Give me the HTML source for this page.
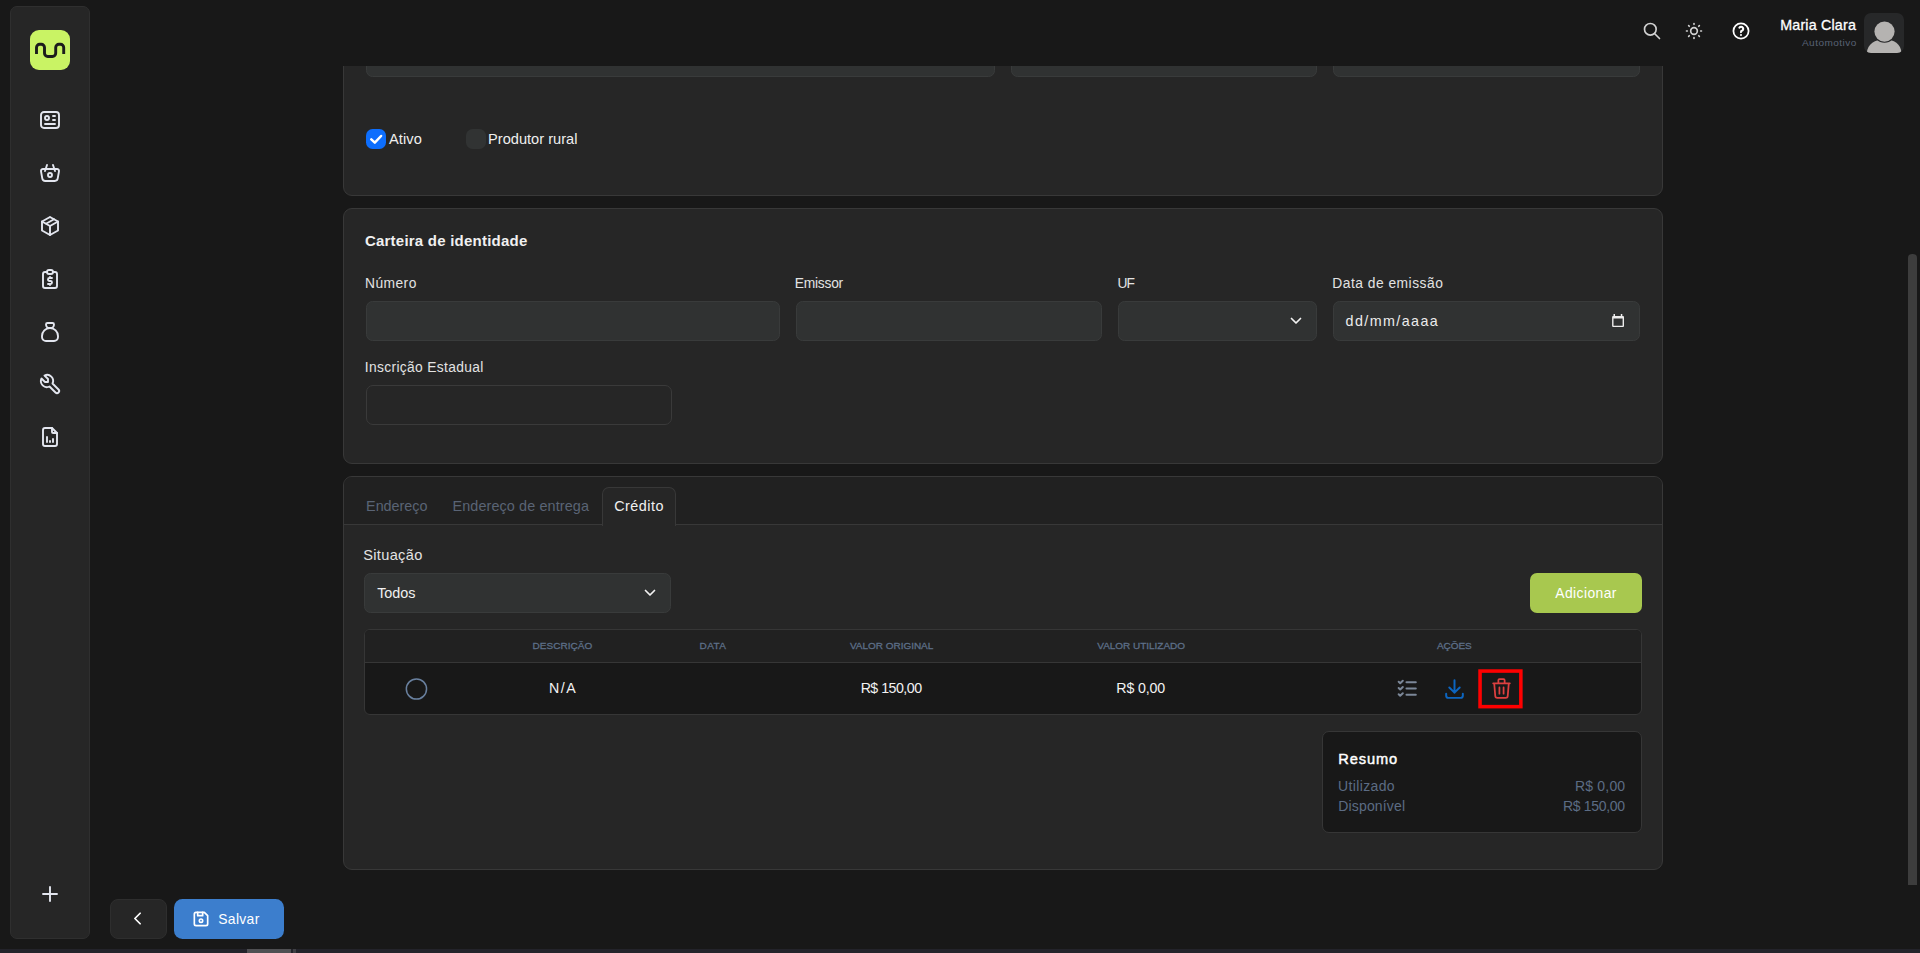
<!DOCTYPE html>
<html lang="pt-BR">
<head>
<meta charset="utf-8">
<title>Cliente</title>
<style>
*{box-sizing:border-box;margin:0;padding:0}
html,body{width:1920px;height:953px;overflow:hidden;background:#181818;font-family:"Liberation Sans",sans-serif;color:#e6e6e6}
body{position:relative}
.abs{position:absolute}
.sidebar{left:10px;top:6px;width:80px;height:933px;background:#262626;border:1px solid #2f2f2f;border-radius:7px}
.logo{left:30px;top:30px;width:40px;height:40px;background:#c9f364;border-radius:9px}
.sico{width:24px;height:24px;left:38px}
.sico svg{display:block;width:24px;height:24px;fill:none;stroke:#e3e6ef;stroke-width:1.9;stroke-linecap:round;stroke-linejoin:round}
.card{background:#262626;border:1px solid #383838;border-radius:9px}
.inp{background:#303232;border:1px solid #393b3b;border-radius:6.500px;height:40px}
.lbl{font-size:14px;color:#e3e3e3;white-space:nowrap;line-height:16px;letter-spacing:-.1px}
.t{white-space:nowrap}
.th{font-weight:400;color:#5d6f88;-webkit-text-stroke:0.300px #5d6f88;transform:scaleY(0.900);transform-origin:0 100%}
.td{font-size:14px;line-height:18px;color:#f2f2f2}
.rs{font-size:14.500px;line-height:18px;color:#5c6c84}
</style>
</head>
<body>

<!-- SIDEBAR -->
<div class="abs sidebar"></div>
<div class="abs logo">
  <svg width="40" height="40" viewBox="0 0 40 40" style="display:block"><path d="M6.500 23.900V17.500a3.200 3.200 0 0 1 3.200-3.200h1.600a3.200 3.200 0 0 1 3.200 3.200V23.300a3.200 3.200 0 0 0 3.200 3.200h4.800a3.200 3.200 0 0 0 3.200-3.200V17.500a3.200 3.200 0 0 1 3.200-3.200h1.600a3.200 3.200 0 0 1 3.200 3.200V23.900" fill="none" stroke="#1c1c1c" stroke-width="2.900" stroke-linecap="butt" stroke-linejoin="round"/></svg>
</div>
<div class="abs sico" style="top:108px"><svg viewBox="0 0 24 24"><path d="M3 7a3 3 0 0 1 3-3h12a3 3 0 0 1 3 3v10a3 3 0 0 1-3 3H6a3 3 0 0 1-3-3z"/><circle cx="9" cy="10" r="2"/><path d="M15 8h2M15 12h2M7 16h10"/></svg></div>
<div class="abs sico" style="top:161px"><svg viewBox="0 0 24 24"><path d="M10 14a2 2 0 1 0 4 0a2 2 0 0 0-4 0"/><path d="M5.001 8H19a2 2 0 0 1 1.977 2.304l-1.255 7.152A3 3 0 0 1 16.756 20H7.244a3 3 0 0 1-2.965-2.544L3.024 10.304A2 2 0 0 1 5.001 8z"/><path d="M17 10l-2-6M7 10l2-6"/></svg></div>
<div class="abs sico" style="top:214px"><svg viewBox="0 0 24 24"><path d="M12 3l8 4.5v9L12 21l-8-4.5v-9L12 3"/><path d="M12 12l8-4.5M12 12v9M12 12L4 7.5M16 5.25l-8 4.5"/></svg></div>
<div class="abs sico" style="top:267px"><svg viewBox="0 0 24 24"><path d="M9 5H7a2 2 0 0 0-2 2v12a2 2 0 0 0 2 2h10a2 2 0 0 0 2-2V7a2 2 0 0 0-2-2h-2"/><path d="M9 5a2 2 0 0 1 2-2h2a2 2 0 0 1 2 2a2 2 0 0 1-2 2h-2a2 2 0 0 1-2-2z"/><path d="M14 11h-2.5a1.5 1.5 0 0 0 0 3h1a1.5 1.5 0 0 1 0 3H10M12 17v1m0-8v1"/></svg></div>
<div class="abs sico" style="top:320px"><svg viewBox="0 0 24 24"><path d="M9.5 3h5A1.5 1.5 0 0 1 16 4.500A3.5 3.500 0 0 1 12.5 8h-1A3.5 3.500 0 0 1 8 4.500A1.5 1.500 0 0 1 9.500 3z"/><path d="M4 17v-1a8 8 0 1 1 16 0v1a4 4 0 0 1-4 4H8a4 4 0 0 1-4-4z"/></svg></div>
<div class="abs sico" style="top:372px"><svg viewBox="0 0 24 24"><path d="M7 10h3V7L6.500 3.500a6 6 0 0 1 8 8l6 6a2 2 0 0 1-3 3l-6-6a6 6 0 0 1-8-8L7 10"/></svg></div>
<div class="abs sico" style="top:425px"><svg viewBox="0 0 24 24"><path d="M14 3v4a1 1 0 0 0 1 1h4"/><path d="M17 21H7a2 2 0 0 1-2-2V5a2 2 0 0 1 2-2h7l5 5v11a2 2 0 0 1-2 2z"/><path d="M9 17v-5M12 17v-1M15 17v-3"/></svg></div>
<div class="abs sico" style="top:882px"><svg viewBox="0 0 24 24"><path d="M12 5v14M5 12h14"/></svg></div>


<!-- TOPBAR -->
<div class="abs" style="left:1642px;top:21px;width:20px;height:20px"><svg viewBox="0 0 24 24" width="20" height="20" style="display:block" fill="none" stroke="#d2d2d2" stroke-width="2" stroke-linecap="round" stroke-linejoin="round"><circle cx="10" cy="10" r="7"/><path d="M21 21l-6-6"/></svg></div>
<div class="abs" style="left:1684px;top:21px;width:20px;height:20px"><svg viewBox="0 0 24 24" width="20" height="20" style="display:block" fill="none" stroke="#d2d2d2" stroke-width="2" stroke-linecap="round" stroke-linejoin="round"><circle cx="12" cy="12" r="4"/><path d="M3 12h1m8-9v1m8 8h1m-9 8v1M5.600 5.600l.7.7m12.100-.7l-.7.7m0 11.400l.7.7m-12.100-.7l-.7.7"/></svg></div>
<div class="abs" style="left:1731px;top:21px;width:20px;height:20px"><svg viewBox="0 0 24 24" width="20" height="20" style="display:block" fill="none" stroke="#ffffff" stroke-width="2.1" stroke-linecap="round" stroke-linejoin="round"><circle cx="12" cy="12" r="9.100"/><path stroke-width="2.500" d="M12 16.800v.01M12 13.300a1.500 1.500 0 0 1 1-1.500a2.500 2.500 0 1 0-2.900-3.800"/></svg></div>
<div class="abs t" id="uname" style="left:1780.18px;top:15.00px;font-size:14.30px;line-height:20px;letter-spacing:0.177px;font-weight:400;-webkit-text-stroke:0.300px #fff;color:#fff">Maria Clara</div>
<div class="abs t" id="urole" style="left:1801.97px;top:32.00px;font-size:10.05px;line-height:20px;letter-spacing:0.445px;color:#596275;transform:scaleY(0.880);transform-origin:0 100%">Automotivo</div>
<div class="abs" style="left:1864px;top:13px;width:40px;height:40px;border-radius:7px;background:#272829;overflow:hidden"><svg width="40" height="40" viewBox="0 0 40 40" style="display:block"><path d="M2.800 40C3.500 31 11 26.300 20.500 26.300S37 31 37.400 40z" fill="#b5b3b1"/><circle cx="20.500" cy="18.600" r="11.200" fill="#272829"/><circle cx="20.500" cy="18.600" r="10.100" fill="#b5b3b1"/></svg></div>


<!-- CONTENT -->
<div class="abs" style="left:0;top:66px;width:1920px;height:887px;overflow:hidden" id="clip">
<div class="abs card" style="left:343px;top:-40px;width:1320px;height:170px"></div>
<div class="abs inp" style="left:366px;top:-29px;width:629px"></div>
<div class="abs inp" style="left:1011px;top:-29px;width:306px"></div>
<div class="abs inp" style="left:1333px;top:-29px;width:307px"></div>
</div>
<div class="abs" style="left:366px;top:129px;width:20px;height:20px;border-radius:6.500px;background:#0d6efd"><svg width="20" height="20" viewBox="0 0 20 20" style="display:block"><path d="M5.300 10.400l3.500 3.300l6.300-6.700" fill="none" stroke="#fff" stroke-width="2.500" stroke-linecap="round" stroke-linejoin="round"/></svg></div>
<div class="abs t" id="t_ativo" style="left:388.99px;top:129.00px;font-size:14.60px;line-height:20px;letter-spacing:0.092px;color:#efefef">Ativo</div>
<div class="abs" style="left:466px;top:129px;width:20px;height:20px;border-radius:6.500px;background:#313333"></div>
<div class="abs t" id="t_prod" style="left:488.04px;top:129.00px;font-size:14.60px;line-height:20px;letter-spacing:0.016px;color:#efefef">Produtor rural</div>

<div class="abs card" style="left:343px;top:208px;width:1320px;height:256px"></div>
<div class="abs t" id="t_cart" style="left:364.91px;top:231.00px;font-size:15.00px;line-height:20px;letter-spacing:0.229px;font-weight:700;color:#f0f0f0">Carteira de identidade</div>
<div class="abs lbl" id="l_num" style="left:365.04px;top:274.00px;font-size:13.80px;line-height:20px;letter-spacing:0.443px">Número</div>
<div class="abs lbl" id="l_emi" style="left:794.85px;top:274.00px;font-size:13.80px;line-height:20px;letter-spacing:-0.255px">Emissor</div>
<div class="abs lbl" id="l_uf" style="left:1117.44px;top:274.00px;font-size:13.80px;line-height:20px;letter-spacing:-0.970px">UF</div>
<div class="abs lbl" id="l_data" style="left:1332.29px;top:274.00px;font-size:13.80px;line-height:20px;letter-spacing:0.501px">Data de emissão</div>
<div class="abs inp" style="left:366px;top:301px;width:414px"></div>
<div class="abs inp" style="left:796px;top:301px;width:306px"></div>
<div class="abs inp" style="left:1118px;top:301px;width:199px"></div>
<div class="abs inp" style="left:1333px;top:301px;width:307px"></div>
<svg class="abs" style="left:1290px;top:317px" width="12" height="8" viewBox="0 0 12 8"><path d="M1.500 1.500L6 6l4.500-4.500" fill="none" stroke="#f2f2f2" stroke-width="1.700" stroke-linecap="round" stroke-linejoin="round"/></svg>
<div class="abs t" id="t_date" style="left:1345.50px;top:311.00px;font-size:14.30px;line-height:20px;letter-spacing:1.424px;color:#ececec">dd/mm/aaaa</div>
<svg class="abs" style="left:1611px;top:313px" width="14" height="15" viewBox="0 0 14 15"><path fill-rule="evenodd" fill="#ededed" d="M2.100 2.900h9.900a1 1 0 0 1 1 1v9.200a1 1 0 0 1-1 1H2.100a1 1 0 0 1-1-1V3.900a1 1 0 0 1 1-1zM2.500 5.400v7.400h9.100V5.400z"/><rect x="2.500" y="1" width="1.500" height="2.200" fill="#ededed"/><rect x="9.800" y="1" width="1.500" height="2.200" fill="#ededed"/></svg>
<div class="abs lbl" id="l_insc" style="left:364.78px;top:358.00px;font-size:13.80px;line-height:20px;letter-spacing:0.349px">Inscrição Estadual</div>
<div class="abs" style="left:366px;top:385px;width:306px;height:40px;border-radius:7px;border:1px solid #3a3a3a;background:#262626"></div>

<div class="abs card" style="left:343px;top:476px;width:1320px;height:394px;overflow:hidden"><div class="abs" style="left:0;top:0;width:1320px;height:48px;background:#212121;border-bottom:1px solid #383838"></div></div>
<div class="abs" style="left:602px;top:487px;width:74px;height:39px;background:#262626;border:1px solid #383838;border-bottom:none;border-radius:7px 7px 0 0"></div>
<div class="abs t" id="tab1" style="left:366.09px;top:496.00px;font-size:14.40px;line-height:20px;letter-spacing:-0.038px;color:#5a6475">Endereço</div>
<div class="abs t" id="tab2" style="left:452.45px;top:496.00px;font-size:14.40px;line-height:20px;letter-spacing:0.113px;color:#5a6475">Endereço de entrega</div>
<div class="abs t" id="tab3" style="left:614.19px;top:496.00px;font-size:14.40px;line-height:20px;letter-spacing:0.470px;color:#f1f1f1">Crédito</div>
<div class="abs lbl" id="l_sit" style="left:363.16px;top:545.00px;font-size:14.60px;line-height:20px;letter-spacing:0.337px">Situação</div>
<div class="abs inp" style="left:364px;top:573px;width:307px"></div>
<div class="abs t" id="t_todos" style="left:377.20px;top:583.00px;font-size:14.40px;line-height:20px;letter-spacing:-0.057px;color:#f1f1f1">Todos</div>
<svg class="abs" style="left:644px;top:589px" width="12" height="8" viewBox="0 0 12 8"><path d="M1.500 1.500L6 6l4.500-4.500" fill="none" stroke="#f2f2f2" stroke-width="1.700" stroke-linecap="round" stroke-linejoin="round"/></svg>
<div class="abs" style="left:1530px;top:573px;width:112px;height:40px;border-radius:7px;background:#a8c84f"></div>
<div class="abs t" id="t_add" style="left:1555.30px;top:583.00px;font-size:13.90px;line-height:20px;letter-spacing:0.399px;color:#fff">Adicionar</div>
<div class="abs" style="left:364px;top:629px;width:1278px;height:86px;border:1px solid #363636;border-radius:6px;background:#181818;overflow:hidden"><div style="height:33px;background:#212121;border-bottom:1px solid #363636"></div></div>
<div class="abs t th" id="h_desc" style="left:532.46px;top:635.00px;font-size:10.00px;line-height:20px;letter-spacing:0.049px">DESCRIÇÃO</div>
<div class="abs t th" id="h_data" style="left:699.58px;top:635.00px;font-size:10.00px;line-height:20px;letter-spacing:0.346px">DATA</div>
<div class="abs t th" id="h_vo" style="left:849.91px;top:635.00px;font-size:10.00px;line-height:20px;letter-spacing:-0.026px">VALOR ORIGINAL</div>
<div class="abs t th" id="h_vu" style="left:1097.30px;top:635.00px;font-size:10.00px;line-height:20px;letter-spacing:-0.029px">VALOR UTILIZADO</div>
<div class="abs t th" id="h_ac" style="left:1436.88px;top:635.00px;font-size:10.00px;line-height:20px;letter-spacing:-0.027px">AÇÕES</div>
<svg class="abs" style="left:404px;top:676px" width="25" height="25" viewBox="0 0 25 25"><circle cx="12.450" cy="13" r="10.100" fill="none" stroke="#69809f" stroke-width="1.500"/></svg>
<div class="abs t td" id="c_na" style="left:548.93px;top:678.00px;font-size:14.20px;line-height:20px;letter-spacing:1.595px">N/A</div>
<div class="abs t td" id="c_vo" style="left:860.63px;top:678.00px;font-size:14.20px;line-height:20px;letter-spacing:-0.507px">R$ 150,00</div>
<div class="abs t td" id="c_vu" style="left:1116.35px;top:678.00px;font-size:14.20px;line-height:20px;letter-spacing:-0.144px">R$ 0,00</div>
<svg class="abs" style="left:1395.400px;top:675.800px" width="25" height="25" viewBox="0 0 24 24" fill="none" stroke="#7b8798" stroke-width="1.900" stroke-linecap="round" stroke-linejoin="round"><path d="M3.500 5.500L5 7l2.500-2.500M3.500 11.500L5 13l2.500-2.500M3.500 17.500L5 19l2.500-2.500M11 6h9M11 12h9M11 18h9"/></svg>
<svg class="abs" style="left:1442.100px;top:676px" width="25" height="25" viewBox="0 0 24 24" fill="none" stroke="#0c65c0" stroke-width="1.900" stroke-linecap="round" stroke-linejoin="round"><path d="M4 17v2a2 2 0 0 0 2 2h12a2 2 0 0 0 2-2v-2M7 11l5 5l5-5M12 4v12"/></svg>
<svg class="abs" style="left:1489px;top:676px" width="25" height="25" viewBox="0 0 24 24" fill="none" stroke="#de4040" stroke-width="1.700" stroke-linecap="round" stroke-linejoin="round"><path d="M4 7h16M10 11v6M14 11v6M5 7l1 12a2 2 0 0 0 2 2h8a2 2 0 0 0 2-2l1-12M9 7V4a1 1 0 0 1 1-1h4a1 1 0 0 1 1 1v3"/></svg>
<svg class="abs" style="left:1470px;top:660px" width="60" height="56" viewBox="0 0 60 56"><rect x="10.050" y="11.050" width="40.800" height="35.600" fill="none" stroke="#ff0000" stroke-width="3.550"/></svg>

<div class="abs" style="left:1322px;top:731px;width:320px;height:102px;border:1px solid #363636;border-radius:7px;background:#181818"></div>
<div class="abs t" id="r_title" style="left:1338.30px;top:749.00px;font-size:14.60px;line-height:20px;letter-spacing:0.879px;font-weight:400;-webkit-text-stroke:0.450px #fff;color:#fff">Resumo</div>
<div class="abs t rs" id="r_u" style="left:1338.10px;top:776.00px;font-size:14.00px;line-height:20px;letter-spacing:0.348px">Utilizado</div>
<div class="abs t rs" id="r_d" style="left:1338.36px;top:796.00px;font-size:14.00px;line-height:20px;letter-spacing:0.141px">Disponível</div>
<div class="abs t rs" id="r_uv" style="left:1575.03px;top:776.00px;font-size:14.00px;line-height:20px;letter-spacing:0.183px">R$ 0,00</div>
<div class="abs t rs" id="r_dv" style="left:1562.90px;top:796.00px;font-size:14.00px;line-height:20px;letter-spacing:-0.295px">R$ 150,00</div>



<!-- FOOTER -->
<div class="abs" style="left:110px;top:899px;width:57px;height:40px;border-radius:8px;background:#262626;border:1px solid #2e2e2e"></div>
<svg class="abs" style="left:127.300px;top:908.100px" width="21" height="21" viewBox="0 0 24 24" fill="none" stroke="#fff" stroke-width="2" stroke-linecap="round" stroke-linejoin="round"><path d="M15 6l-6 6l6 6"/></svg>
<div class="abs" style="left:174px;top:899px;width:110px;height:40px;border-radius:8.500px;background:#3c7ecd"></div>
<svg class="abs" style="left:190.800px;top:909px" width="20" height="20" viewBox="0 0 24 24" fill="none" stroke="#fff" stroke-width="2" stroke-linecap="round" stroke-linejoin="round"><path d="M6 4h10l4 4v10a2 2 0 0 1-2 2H6a2 2 0 0 1-2-2V6a2 2 0 0 1 2-2"/><circle cx="12" cy="14" r="2"/><path d="M14 4v4H8V4"/></svg>
<div class="abs t" id="t_salvar" style="left:218.26px;top:909.00px;font-size:13.90px;line-height:20px;letter-spacing:0.336px;color:#fff">Salvar</div>
<div class="abs" style="left:1908px;top:254px;width:9px;height:631px;background:#3d3d3d;border-radius:4px 4px 0 0"></div>
<div class="abs" style="left:0;top:949px;width:1920px;height:4px;background:#23232a"></div>
<div class="abs" style="left:247px;top:949px;width:44px;height:4px;background:#4f4f52"></div>
<div class="abs" style="left:292.500px;top:949px;width:3px;height:4px;background:#3f3f44"></div>


</body>
</html>
